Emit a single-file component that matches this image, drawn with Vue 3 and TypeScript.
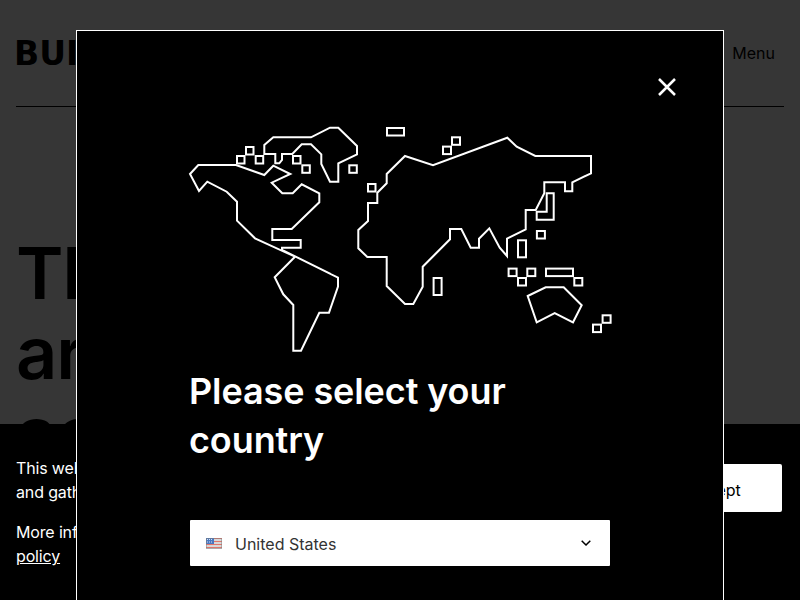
<script setup lang="ts">
// outlines of the continents, traced on the map's own grid
const landmasses: string[] = [
  '190,174 198.3,165 236,165 264.3,175 273.3,165.7 290.3,174 271.7,182.7 282.3,193.3 292.7,193.3 301.7,184.3 319.3,193.3 319.3,202.3 291.7,229 272.3,229 272.3,240 300.7,240 300.7,247.7 282,247.7 282,250 338,277.7 338,286.7 329,312.7 319.3,312.7 301,350.7 293.3,350.7 293.3,305 283.3,294.3 274.7,277.3 295,256.7 255,238.3 237,220.7 237,201.7 226.7,191.7 207.3,181.7 199,191',
  '264.3,154 264.3,145 273.3,137.3 311,137.3 330,127.7 338.3,127.7 357,146 357,154.3 338.3,163.3 338.3,181.7 330,181.7 321.3,164 321.3,154.3 311,144.3 301.7,144.3 292.3,154 282,154 282,160 279.3,163.3 275.3,163.3 275.3,154',
  '405,156 433,165.3 507.3,137.7 516.7,146.7 535.3,156 591,156 591,173.3 572.3,182.3 572.3,191.3 565,191.3 565,182.3 544.3,182.3 544.3,193.3 535.7,210 525.7,210 525.7,229.3 507,238.7 507,256 499.7,247.7 489.3,228.3 479,238.7 479,247.7 470.7,247.7 461.3,229 450,229 450,239.3 422.7,266.7 422.7,286.7 413.3,304 405,304 386.7,286 386.7,257 367.3,257 358.3,248.3 358.3,230 368,221 368,203 377.3,203 377.3,192.7 386.7,183.3 386.7,174',
  '546.7,193.3 553.7,193.3 553.7,219.7 536.7,219.7 536.7,211.7 546.7,211.7',
  '527.7,296 545.7,287.3 563.7,287.3 581.7,305.3 573,322.3 554.7,313 536.7,322.3',
]

interface Islet { x: number; y: number; w: number; h: number }

const islets: Islet[] = [
  { x: 237, y: 156, w: 7.5, h: 7.5 },
  { x: 246, y: 147, w: 7.5, h: 7.5 },
  { x: 255.7, y: 156, w: 7.5, h: 7.5 },
  { x: 293, y: 156, w: 7.5, h: 7.5 },
  { x: 302.3, y: 165.3, w: 7.5, h: 7.5 },
  { x: 349.3, y: 165.3, w: 7.5, h: 7.5 },
  { x: 368, y: 184, w: 7.5, h: 7.5 },
  { x: 387, y: 128, w: 17, h: 7.5 },
  { x: 452, y: 137.3, w: 8, h: 7.5 },
  { x: 443, y: 146.6, w: 8, h: 7.5 },
  { x: 536.9, y: 231, w: 8, h: 7.5 },
  { x: 518, y: 240.3, w: 8, h: 17 },
  { x: 508.6, y: 268.6, w: 8, h: 7.5 },
  { x: 527.3, y: 268.6, w: 8, h: 7.5 },
  { x: 518, y: 278, w: 8, h: 7.5 },
  { x: 546, y: 268.6, w: 27, h: 7.5 },
  { x: 574.3, y: 278, w: 8, h: 7.5 },
  { x: 433.6, y: 278, w: 8, h: 17 },
  { x: 602.6, y: 315.3, w: 8, h: 7.5 },
  { x: 593, y: 324.6, w: 8, h: 7.5 },
]
</script>

<template>
  <div class="page">
    <header class="site-header">
      <span class="logo">BUILD</span>
      <span class="menu">Menu</span>
    </header>
    <h1 class="hero">The new way<br />around the<br />across</h1>
  </div>

  <div class="backdrop"></div>

  <aside class="cookies">
    <div class="cookies-text">
      <p>This website uses cookies to improve your experience<br />and gather anonymous usage data.</p>
      <p>More information is in our cookie<br /><a href="#">policy</a></p>
    </div>
    <button class="accept" type="button">Accept</button>
  </aside>

  <section class="modal">
    <button class="close" type="button" aria-label="Close">
      <svg width="20" height="20" viewBox="0 0 20 20">
        <path d="M2 2 18 18M18 2 2 18" />
      </svg>
    </button>

    <svg class="map" width="422" height="227" viewBox="190 126 422 227">
      <polygon v-for="(points, i) in landmasses" :key="i" :points="points" />
      <rect v-for="(r, i) in islets" :key="'r' + i" :x="r.x" :y="r.y" :width="r.w" :height="r.h" />
    </svg>

    <h2 class="title">Please select your country</h2>

    <div class="select">
      <svg class="flag" width="16" height="11" viewBox="0 0 16 11">
        <rect width="16" height="11" fill="#d8d8d8" />
        <path d="M0 .5h16M0 3.5h16M0 6.5h16M0 9.5h16" stroke="#e0766c" stroke-width="1" />
        <rect width="8" height="6" fill="#4a78c0" />
        <path d="M1 1.5h6M1 4h6" stroke="#cfe0f7" stroke-width="1" stroke-dasharray="1 1" />
        <rect x=".5" y=".5" width="15" height="10" fill="none" stroke="#7d7d7d" stroke-opacity=".5" />
      </svg>
      <span class="select-label">United States</span>
      <svg class="chevron" width="10" height="6" viewBox="0 0 10 6">
        <path d="M.7.7 5 5 9.3.7" />
      </svg>
    </div>
  </section>
</template>

<style scoped>
.page {
  padding: 0 16px;
  height: 600px;
  overflow: hidden;
  box-sizing: border-box;
  background: #fff;
  color: #000;
  font-family: Inter, "Liberation Sans", sans-serif;
}

.site-header {
  height: 106px;
  border-bottom: 1px solid #000;
  display: flex;
  align-items: center;
  justify-content: space-between;
  box-sizing: content-box;
}

.logo {
  margin-left: -2px;
  font-family: "DejaVu Sans", sans-serif;
  font-size: 33px;
  font-weight: 700;
}

.menu {
  font-size: 16px;
  padding-right: 9px;
}

.hero {
  margin: 126px 0 0;
  font-size: 72px;
  line-height: 80px;
  font-weight: 600;
  letter-spacing: -1px;
}

.backdrop {
  position: fixed;
  inset: 0;
  background: rgba(0, 0, 0, 0.79);
}

.cookies {
  position: fixed;
  left: 0;
  right: 0;
  bottom: 0;
  height: 176px;
  box-sizing: border-box;
  padding: 32px 18px 0 16px;
  background: #000;
  color: #fff;
  display: flex;
  justify-content: space-between;
  align-items: flex-start;
  font-family: Inter, "Liberation Sans", sans-serif;
  font-size: 16px;
  line-height: 24px;
  letter-spacing: -0.15px;
}

.cookies-text p {
  margin: 0 0 16px;
}

.cookies-text a {
  color: #fff;
}

.accept {
  width: 134px;
  height: 48px;
  margin-top: 8px;
  padding: 3px 2px 0 0;
  border: 0;
  border-radius: 2px;
  background: #fff;
  color: #000;
  font: inherit;
  letter-spacing: 0;
}

.modal {
  position: fixed;
  left: 76px;
  top: 30px;
  width: 648px;
  height: 600px;
  box-sizing: border-box;
  border: 1px solid #fff;
  background: #000;
  padding: 95px 113px 0;
  color: #fff;
  font-family: Inter, "Liberation Sans", sans-serif;
}

.close {
  position: absolute;
  top: 46px;
  right: 46px;
  padding: 0;
  border: 0;
  background: none;
  display: flex;
}

.close path {
  fill: none;
  stroke: #fff;
  stroke-width: 2.5;
}

.map {
  display: block;
  overflow: visible;
}

.map polygon,
.map rect {
  fill: none;
  stroke: #fff;
  stroke-width: 2;
}

.title {
  margin: 14px 0 55px -1px;
  font-size: 36px;
  line-height: 49px;
  font-weight: 600;
  letter-spacing: -0.1px;
}

.select {
  width: 420px;
  height: 46px;
  box-sizing: border-box;
  background: #fff;
  border-radius: 1px;
  display: flex;
  align-items: center;
  padding: 0 19px 0 16px;
  color: #333;
  font-size: 16px;
}

.flag {
  flex: none;
}

.select-label {
  margin-left: 13px;
  padding-top: 2px;
  flex: 1;
}

.chevron {
  flex: none;
  margin-top: -1px;
}

.chevron path {
  fill: none;
  stroke: #000;
  stroke-width: 1.5;
}
</style>
